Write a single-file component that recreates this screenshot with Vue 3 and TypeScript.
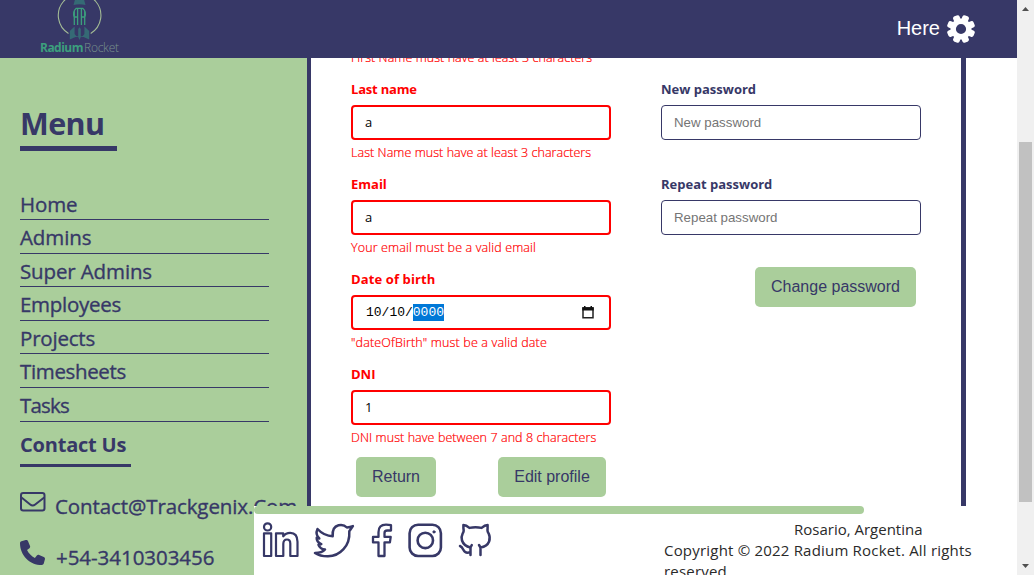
<script setup lang="ts">
interface Field {
  label: string
  kind: 'text' | 'date'
  value: string
  error: string
  cls: string
}

const menu: { name: string; cls: string }[] = [
  { name: 'Home', cls: 'm-home' },
  { name: 'Admins', cls: 'm-admins' },
  { name: 'Super Admins', cls: 'm-super' },
  { name: 'Employees', cls: 'm-employees' },
  { name: 'Projects', cls: 'm-projects' },
  { name: 'Timesheets', cls: 'm-timesheets' },
  { name: 'Tasks', cls: 'm-tasks' }
]

const fields: Field[] = [
  { label: 'Last name', kind: 'text', value: 'a', error: 'Last Name must have at least 3 characters', cls: 'f-last' },
  { label: 'Email', kind: 'text', value: 'a', error: 'Your email must be a valid email', cls: 'f-email' },
  { label: 'Date of birth', kind: 'date', value: '', error: '"dateOfBirth" must be a valid date', cls: 'f-date' },
  { label: 'DNI', kind: 'text', value: '1', error: 'DNI must have between 7 and 8 characters', cls: 'f-dni' }
]

const passwords: string[] = ['New password', 'Repeat password']
</script>

<template>
  <div class="window">
    <div class="page">
      <header class="header">
        <svg class="logo" width="84" height="58" viewBox="0 0 84 58">
          <path d="M31.5 33.5A21.3 21.3 0 1 1 53.7 33.5" fill="none" stroke="#a3bb95" stroke-width="1.1" />
          <path d="M39.5-6h6l3 11q-6 -1.5 -12 0z" fill="#356a75" />
          <path d="M37.3 25V10.5M40.6 25V9M44.4 25V9M47.7 25V10.5M37.3 17.5q-2-6 2-9.2h6.4q4 3.200 2 9.200M36.800 17h3.500M44.800 17h3.500" fill="none" stroke="#3c9f7d" stroke-width="1.300" />
          <path d="M32.800 39.500V31l4.800-4.500v7.500q1.500 2.500 3.600 2.500V29l1.300-1.700 1.300 1.700v7.500q2.200 0 3.600-2.500v-7.500l4.800 4.500v8.500l-5.700-2.500h-2.700l-1.300 3-1.300-3h-2.700z" fill="#356a75" />
          <text x="3" y="52" class="logo-bold" textLength="43.500">Radium</text>
          <text x="47" y="52" class="logo-thin" textLength="35">Rocket</text>
        </svg>
        <div class="user">
          <span>Here</span>
          <svg width="28" height="28" viewBox="0 0 28 28">
            <g fill="#fff">
              <path fill-rule="evenodd" d="M14 3.500a10.500 10.500 0 1 0 0 21a10.500 10.500 0 1 0 0-21zM14 8.900a5.100 5.100 0 1 1 0 10.200a5.100 5.100 0 1 1 0-10.200z" />
              <rect v-for="n in 8" :key="n" x="10.600" y="-.2" width="6.800" height="7" rx="2.200" :transform="`rotate(${n * 45 - 22.5} 14 14)`" />
            </g>
          </svg>
        </div>
      </header>

      <div class="body">
        <aside class="sidebar">
          <h1>Menu</h1>
          <nav>
            <a v-for="m in menu" :key="m.name"><span :class="m.cls">{{ m.name }}</span></a>
          </nav>
          <h2><span>Contact Us</span></h2>
          <p class="contact mail">
            <svg width="26" height="20" viewBox="0 0 26 20" fill="none" stroke="#373867" stroke-width="2">
              <rect x="1" y="1" width="23.500" height="17.500" rx="2.200" />
              <path d="M1.500 5.500l8.700 7q2.500 2 5 0l9-7" />
            </svg>
            <span>Contact@Trackgenix.Com</span>
          </p>
          <p class="contact phone">
            <svg width="25" height="25" viewBox="0 0 512 512">
              <path fill="#373867" d="M164.900 24.600c-7.700-18.600-28-28.500-47.400-23.200l-88 24C12.100 30.200 0 46 0 64c0 247.400 200.600 448 448 448 18 0 33.800-12.100 38.600-29.500l24-88c5.300-19.400-4.600-39.700-23.200-47.400l-96-40c-16.300-6.800-35.200-2.100-46.300 11.600L304.700 368C234.300 334.700 177.300 277.700 144 207.300L193.300 167c13.700-11.200 18.400-30 11.600-46.300l-40-96z" />
            </svg>
            <span>+54-3410303456</span>
          </p>
        </aside>

        <main class="profile">
          <section class="column left">
            <p class="error first"><span>First Name must have at least 3 characters</span></p>
            <div v-for="f in fields" :key="f.label" class="field" :class="f.cls">
              <label><span>{{ f.label }}</span></label>
              <div class="box invalid">
                <template v-if="f.kind === 'date'">
                  <span class="date">10/10/<span class="selected">0000</span></span>
                  <svg class="calendar" width="12" height="13" viewBox="0 0 12 13">
                    <path d="M1 2h10v9.800H1z" fill="none" stroke="#222" stroke-width="1.500" />
                    <path d="M.3 1.300h11.400v3.200H.3zM2 0h1.500v2H2zM8.500 0H10v2H8.500z" fill="#111" />
                  </svg>
                </template>
                <span v-else class="value">{{ f.value }}</span>
              </div>
              <p class="error"><span>{{ f.error }}</span></p>
            </div>
            <div class="actions">
              <button>Return</button>
              <button class="edit">Edit profile</button>
            </div>
          </section>
          <section class="column right">
            <div v-for="p in passwords" :key="p" class="field">
              <label><span>{{ p }}</span></label>
              <div class="box"><span class="hint">{{ p }}</span></div>
            </div>
            <button class="change">Change password</button>
          </section>
        </main>
      </div>

      <footer class="footer">
        <div class="bar"></div>
        <div class="footer-row">
          <svg class="social" width="230" height="38" viewBox="0 0 230 38" fill="none" stroke="#373867" stroke-width="2.200" stroke-linejoin="round" stroke-linecap="round">
            <circle cx="5.600" cy="4.900" r="3.600" />
            <path d="M2 11.300h7.200v22.700H2zM14 11.300h7.200v3q2.500-3.500 7-3.500 7.300 0 7.300 9V34h-7.200V21.500q0-4-3.300-4-3.700 0-3.700 4.500v12H14z" />
            <path d="M53 31q7 0 10-3.500-5-.5-6.500-4.700 1.800.1 2.800-.7-4.800-2-4.600-6.300 1 .6 2.600.7-4.300-4-1.800-9.500 6.500 7 15.200 7.200Q70 5 76.500 3.300q5-1.300 8.400 2.200 3.300-.4 6-1.400l-3.600 5.200Q88 20 81.500 27.200 75 34.500 65.500 34.300 58 34.300 53 31z" stroke-width="2.500" />
            <path d="M129 3.200v5.300h-3.700q-2.800 0-2.800 2.600v3.800h6.200l-.8 5.500h-5.400v13.600h-6V20.400H111v-5.500h5.500v-4.700q0-7.500 7.500-7.500 3 0 5 .5z" stroke-width="2.300" />
            <rect x="147.600" y="2.700" width="31.300" height="31.300" rx="8.500" stroke-width="2.600" />
            <circle cx="163.300" cy="18.400" r="7.700" stroke-width="2.600" />
            <circle cx="172" cy="9.900" r="1.200" fill="#373867" stroke-width=".8" />
            <path d="M208.500 33v-7.500q-6.700-1.500-8.500-7-1-4 .7-7.200 1.500-1.500.7-5.300V3q2.800 0 6 2.900 6.200-1.400 12.200 0 3.200-2.900 6-2.900V6q-.5 3.800 1 5.300 2 4.200.5 8.200-2 5-8.600 6V33M208.500 30q-5 2-7-2-1.700-3.300-3.500-4M208.500 25.500l1.300-2.500M218.500 25.500l-1.500-2.500" stroke-width="2.500" />
          </svg>
          <div class="legal">
            <p class="city"><span>Rosario, Argentina</span></p>
            <p class="copy"><span>Copyright © 2022 Radium Rocket. All rights</span><br />reserved.</p>
          </div>
        </div>
      </footer>
    </div>

    <div class="scrollbar">
      <svg width="9" height="5" viewBox="0 0 9 5"><path d="M1 5l3.500-4L8 5z" fill="#505050" /></svg>
      <div class="thumb"></div>
      <svg width="9" height="5" viewBox="0 0 9 5"><path d="M1 0l3.500 4L8 0z" fill="#505050" /></svg>
    </div>
  </div>
</template>

<style>
body {
  margin: 0;
  overflow: hidden;
}
</style>

<style scoped>
.window {
  display: flex;
  width: 1034px;
  height: 575px;
  overflow: hidden;
  background: #fff;
  color: #373867;
  font-family: "Open Sans", "Noto Sans", sans-serif;
}
h1, h2, p { margin: 0; }
span { white-space: nowrap; }
.page {
  position: relative;
  width: 1017px;
  height: 575px;
  overflow: hidden;
}
.header {
  display: flex;
  justify-content: space-between;
  height: 58px;
  padding: 0 42px 0 37px;
  box-sizing: border-box;
  background: #373867;
}
.logo { overflow: hidden; }
.logo-bold { font: 700 12px "Open Sans", sans-serif; fill: #3c9f7d; }
.logo-thin { font: 300 12px "Open Sans", sans-serif; fill: #78918c; }
.user {
  display: flex;
  align-items: center;
  gap: 7px;
  height: 57px;
  color: #fff;
  font: 20px "Liberation Sans", sans-serif;
}
.user svg { margin-top: 1px; }
.body { display: flex; height: 517px; }
.sidebar {
  width: 307px;
  padding: 47px 0 0 20px;
  box-sizing: border-box;
  background: #aace9b;
  overflow: hidden;
}
h1 {
  width: 97px;
  height: 41px;
  border-bottom: 5px solid #373867;
  font-size: 30.5px;
  line-height: 37px;
  font-weight: 700;
  letter-spacing: -0.6px;
}
nav { width: 249px; margin-top: 35.700px; }
nav a {
  display: block;
  height: 32.550px;
  border-bottom: 1px solid #373867;
  font-size: 20.500px;
  line-height: 35.200px;
  -webkit-text-stroke: 0.35px #373867;
}
.m-home { letter-spacing: -0.15px; }
.m-admins { letter-spacing: -0.1px; }
.m-super { letter-spacing: -0.13px; }
.m-employees { letter-spacing: -0.28px; }
.m-projects { letter-spacing: -0.2px; }
.m-timesheets { letter-spacing: -0.35px; }
.m-tasks { letter-spacing: -0.8px; }
h2 {
  width: 111px;
  height: 42.850px;
  border-bottom: 3px solid #373867;
  font-size: 20px;
  line-height: 46px;
  letter-spacing: -0.2px;
}
.contact {
  display: flex;
  font-size: 20.500px;
  line-height: 28px;
  letter-spacing: -0.1px;
  -webkit-text-stroke: 0.35px #373867;
}
.mail { margin-top: 24px; gap: 9px; }
.mail svg { margin-top: 0.800px; }
.mail span { padding-top: 1px; }
.phone { margin-top: 19px; gap: 11px; letter-spacing: -0.04px; }
.phone svg { margin-top: 1px; }
.phone span { padding-top: 4px; }
.profile {
  display: flex;
  gap: 50px;
  width: 659px;
  height: 448px;
  padding-left: 40px;
  box-sizing: border-box;
  border-left: 4px solid #373867;
  border-right: 5px solid #373867;
  overflow: hidden;
}
.column { width: 260px; }
.right { padding-top: 22px; }
.error {
  height: 18px;
  font-size: 12.500px;
  line-height: 18px;
  font-weight: 300;
  letter-spacing: 0.06px;
  color: #f00;
  -webkit-text-stroke: 0.2px #f00;
}
.f-email .error { letter-spacing: 0.13px; }
.f-date .error { letter-spacing: 0.16px; }
.f-dni .error { letter-spacing: 0.08px; }
.first { margin: -9px 0 13px; }
.field { height: 95px; }
label {
  display: block;
  height: 25px;
  font-size: 13px;
  line-height: 19px;
  font-weight: 700;
}
.left label { color: #f00; }
.f-last label { letter-spacing: -0.2px; }
.f-date label { letter-spacing: 0.12px; }
.box {
  display: flex;
  align-items: center;
  height: 35px;
  padding: 0 12px;
  margin-bottom: 4px;
  border: 1px solid #373867;
  border-radius: 4px;
  box-sizing: border-box;
  font: 13.300px "Liberation Sans", sans-serif;
}
.invalid {
  border: 2px solid #f00;
  color: #000;
  font-family: "Open Sans", sans-serif;
  font-size: 13px;
}
.value { padding-bottom: 2px; }
.hint { color: #757575; }
.date { font: 13px/17px "Liberation Mono", monospace; padding-left: 1px; }
.selected { display: inline-block; background: #0078d7; color: #fff; }
.calendar { margin: 0 3px 0 auto; }
.actions {
  display: flex;
  justify-content: space-between;
  padding: 0 5px;
  margin-top: -3px;
}
button {
  height: 40px;
  width: 80px;
  padding: 0;
  border: 0;
  border-radius: 5px;
  background: #aace9b;
  color: #373867;
  font: 16px "Liberation Sans", sans-serif;
}
.edit { width: 108px; }
.change { display: block; width: 161px; margin: -3px 5px 0 auto; }
.footer {
  position: absolute;
  left: 254px;
  top: 506px;
  width: 763px;
  height: 69px;
  overflow: hidden;
  background: #fff;
}
.bar { width: 610px; height: 8px; border-radius: 4px; background: #aace9b; }
.footer-row { display: flex; justify-content: space-between; padding: 5px 45px 0 7.500px; }
.social { margin-top: 3px; }
.legal { width: 308px; font-size: 15px; line-height: 21px; color: #2a2a2a; }
.city { padding-left: 130px; }
.copy { letter-spacing: 0.2px; }
.scrollbar {
  display: flex;
  flex-direction: column;
  align-items: center;
  width: 17px;
  height: 575px;
  background: #f0f0f0;
}
.scrollbar svg { margin-top: 6px; }
.thumb { width: 13px; height: 360px; margin: 131px 0 56px; background: #c1c1c1; }
</style>
